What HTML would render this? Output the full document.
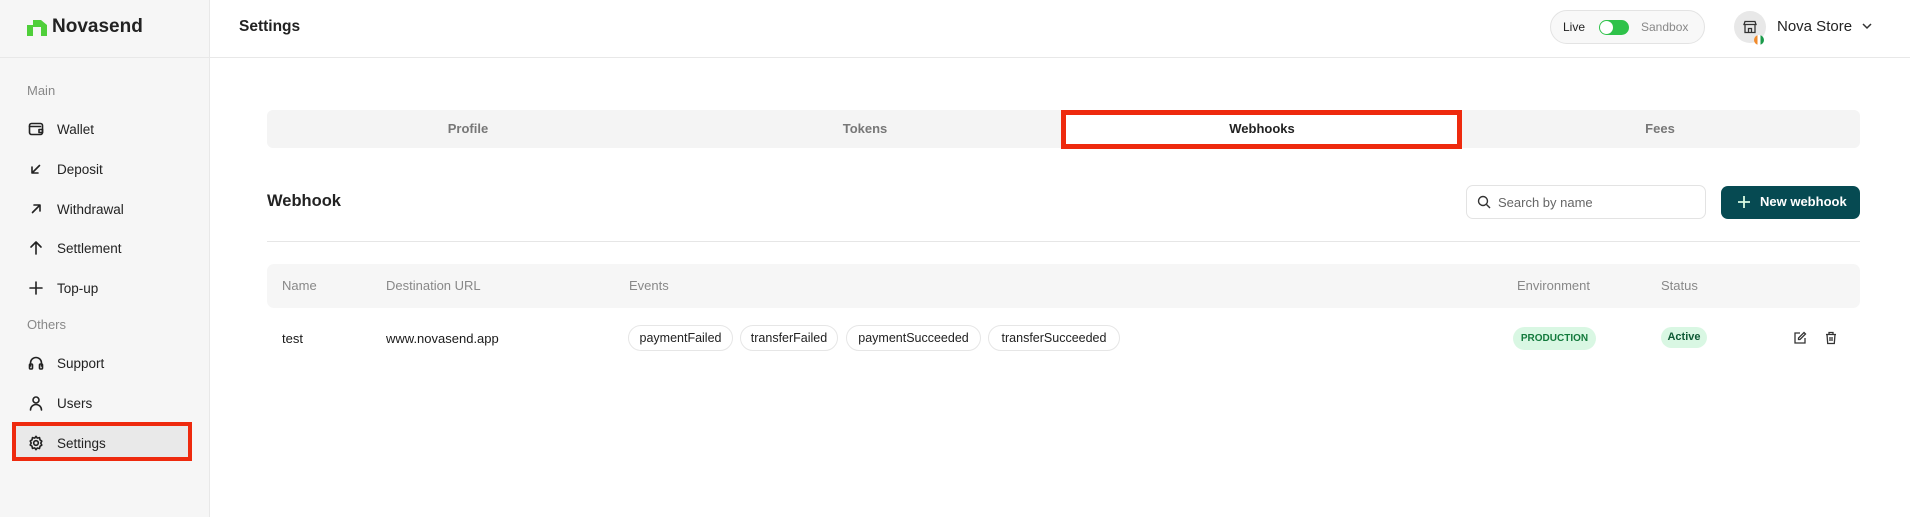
<!DOCTYPE html>
<html><head><meta charset="utf-8"><style>
*{box-sizing:border-box;margin:0;padding:0}
body{width:1910px;height:517px;overflow:hidden;background:#fff;font-family:"Liberation Sans",sans-serif;color:#1a1a1a;position:relative}
.abs{position:absolute}
.side{left:0;top:0;width:210px;height:517px;background:#f6f6f6;border-right:1px solid #e8e8e8}
.sec{left:27px;font-size:13px;color:#888}
.item{left:28px;font-size:13.5px;color:#222;display:flex;align-items:center;gap:13px;height:20px}
.item svg{width:16px;height:16px;fill:none;stroke:#222;stroke-width:1.6;stroke-linecap:round;stroke-linejoin:round}
.tab{top:110px;height:38px;width:398px;line-height:38px;text-align:center;font-size:13px;color:#777;font-weight:bold}
.th{top:264px;line-height:44px;font-size:13px;color:#888}
.chip{top:325px;height:26px;line-height:24px;border:1px solid #e6e6e6;border-radius:13px;font-size:12.5px;text-align:center;color:#222}
</style></head><body>
<div class="abs side"></div>
<div class="abs" style="left:0;top:57px;width:1910px;height:1px;background:#e8e8e8"></div>
<svg class="abs" style="left:27px;top:20px" width="21" height="16" viewBox="0 0 21 16"><path d="M0 5h6V0h8l6 5v11h-6V7H6v9H0z" fill="#4fcf3a"/></svg>
<div class="abs" style="left:52px;top:16px;font-size:19px;font-weight:bold;color:#222">Novasend</div>
<div class="abs" style="left:239px;top:18px;font-size:15.5px;font-weight:bold;color:#222">Settings</div>

<div class="abs sec" style="top:83px">Main</div>
<div class="abs item" style="top:119px"><svg viewBox="0 0 16 16"><rect x="1.5" y="2.5" width="13" height="11" rx="2"/><path d="M1.5 5.5h11M11 8.5h3.5v3H11z"/></svg>Wallet</div>
<div class="abs item" style="top:159px"><svg viewBox="0 0 16 16"><path d="M11.5 4.5l-7 7M4 6v6h6"/></svg>Deposit</div>
<div class="abs item" style="top:199px"><svg viewBox="0 0 16 16"><path d="M4.5 11.5l7-7M6 4h6v6"/></svg>Withdrawal</div>
<div class="abs item" style="top:238px"><svg viewBox="0 0 16 16"><path d="M8 14V2M3 7l5-5 5 5"/></svg>Settlement</div>
<div class="abs item" style="top:278px"><svg viewBox="0 0 16 16"><path d="M8 2v12M2 8h12"/></svg>Top-up</div>
<div class="abs sec" style="top:317px">Others</div>
<div class="abs item" style="top:353px"><svg viewBox="0 0 16 16"><path d="M2.5 11V8a5.5 5.5 0 0111 0v3"/><rect x="1.5" y="9" width="3" height="5" rx="1"/><rect x="11.5" y="9" width="3" height="5" rx="1"/></svg>Support</div>
<div class="abs item" style="top:393px"><svg viewBox="0 0 16 16"><circle cx="8" cy="5" r="3"/><path d="M2.5 15a5.5 5.5 0 0111 0"/></svg>Users</div>
<div class="abs" style="left:12px;top:422px;width:180px;height:39px;border:4px solid #ee2a0e;background:#e9e9e9"></div>
<div class="abs item" style="top:433px"><svg viewBox="0 0 16 16"><circle cx="8" cy="8" r="2.3"/><path d="M8 1.3l1.3 1.8 2.2-.5.5 2.2 1.8 1.3-1 2 1 2-1.8 1.2-.5 2.2-2.2-.5L8 14.7l-1.3-1.8-2.2.5-.5-2.2L2.2 10l1-2-1-2 1.8-1.2.5-2.2 2.2.5z"/></svg>Settings</div>

<div class="abs" style="left:1550px;top:10px;width:155px;height:34px;border:1px solid #e3e3e3;border-radius:17px;background:#f8f8f8"></div>
<div class="abs" style="left:1563px;top:20px;font-size:12px;color:#222">Live</div>
<div class="abs" style="left:1599px;top:20px;width:30px;height:15px;border-radius:8px;background:#2fc24a"></div>
<div class="abs" style="left:1600px;top:21px;width:13px;height:13px;border-radius:50%;background:#fff"></div>
<div class="abs" style="left:1641px;top:20px;font-size:12px;color:#888">Sandbox</div>
<div class="abs" style="left:1734px;top:11px;width:32px;height:32px;border-radius:50%;background:#e8e8e8"></div>
<svg class="abs" style="left:1743px;top:20px" width="14" height="14" viewBox="0 0 14 14" fill="none" stroke="#333" stroke-width="1.3"><path d="M2 1.5h10l1 3H1zM2 4.5v8h10v-8M5.5 12.5v-4h3v4"/></svg>
<div class="abs" style="left:1754px;top:35px;width:10px;height:10px;border-radius:50%;background:linear-gradient(90deg,#f08a2c 33%,#fff 33% 66%,#1a9a4a 66%)"></div>
<div class="abs" style="left:1777px;top:18px;font-size:15px;color:#222">Nova Store</div>
<svg class="abs" style="left:1862px;top:23px" width="10" height="7" viewBox="0 0 10 7" fill="none" stroke="#333" stroke-width="1.5"><path d="M1 1l4 4 4-4"/></svg>

<div class="abs" style="left:267px;top:110px;width:1593px;height:38px;background:#f4f4f4;border-radius:6px"></div>
<div class="abs tab" style="left:269px">Profile</div>
<div class="abs tab" style="left:666px">Tokens</div>
<div class="abs" style="left:1061px;top:110px;width:401px;height:39px;border:5px solid #ee2a0e;background:#fff"></div>
<div class="abs tab" style="left:1063px;color:#222">Webhooks</div>
<div class="abs tab" style="left:1461px">Fees</div>

<div class="abs" style="left:267px;top:192px;font-size:16.5px;font-weight:bold;color:#222">Webhook</div>
<div class="abs" style="left:267px;top:241px;width:1593px;height:1px;background:#e6e6e6"></div>
<div class="abs" style="left:1466px;top:185px;width:240px;height:34px;border:1px solid #e3e3e3;border-radius:7px"></div>
<svg class="abs" style="left:1477px;top:195px" width="14" height="14" viewBox="0 0 14 14" fill="none" stroke="#333" stroke-width="1.4"><circle cx="6" cy="6" r="4.5"/><path d="M9.5 9.5l3.5 3.5"/></svg>
<div class="abs" style="left:1498px;top:195px;font-size:13px;color:#666">Search by name</div>
<div class="abs" style="left:1721px;top:186px;width:139px;height:33px;border-radius:7px;background:#064a52"></div>
<svg class="abs" style="left:1737px;top:195px" width="14" height="14" viewBox="0 0 14 14" stroke="#d9fbe3" stroke-width="1.8"><path d="M7 1v12M1 7h12"/></svg>
<div class="abs" style="left:1760px;top:194px;font-size:13px;font-weight:bold;color:#fff">New webhook</div>

<div class="abs" style="left:267px;top:264px;width:1593px;height:44px;background:#f6f6f6;border-radius:7px"></div>
<div class="abs th" style="left:282px">Name</div>
<div class="abs th" style="left:386px">Destination URL</div>
<div class="abs th" style="left:629px">Events</div>
<div class="abs th" style="left:1517px">Environment</div>
<div class="abs th" style="left:1661px">Status</div>

<div class="abs" style="left:282px;top:331px;font-size:13px">test</div>
<div class="abs" style="left:386px;top:331px;font-size:13px">www.novasend.app</div>
<div class="abs chip" style="left:628px;width:105px">paymentFailed</div>
<div class="abs chip" style="left:740px;width:98px">transferFailed</div>
<div class="abs chip" style="left:846px;width:135px">paymentSucceeded</div>
<div class="abs chip" style="left:988px;width:132px">transferSucceeded</div>
<div class="abs" style="left:1513px;top:327px;width:83px;height:23px;border-radius:12px;background:#d9f7e3;color:#137a3c;font-size:10px;font-weight:bold;text-align:center;line-height:23px">PRODUCTION</div>
<div class="abs" style="left:1661px;top:327px;width:46px;height:21px;border-radius:11px;background:#d9f7e3;color:#0e5a35;font-size:11px;font-weight:bold;text-align:center;line-height:21px">Active</div>
<svg class="abs" style="left:1793px;top:331px" width="14" height="14" viewBox="0 0 14 14" fill="none" stroke="#333" stroke-width="1.3"><path d="M7 2H2v10h10V7"/><path d="M11 1.5l1.5 1.5L7 8.5H5.5V7z"/></svg>
<svg class="abs" style="left:1824px;top:331px" width="14" height="14" viewBox="0 0 14 14" fill="none" stroke="#333" stroke-width="1.3"><path d="M2 3.5h10M5 3.5V1.5h4v2M3 3.5l.7 9h6.6l.7-9M6 6v4M8 6v4"/></svg>
</body></html>
